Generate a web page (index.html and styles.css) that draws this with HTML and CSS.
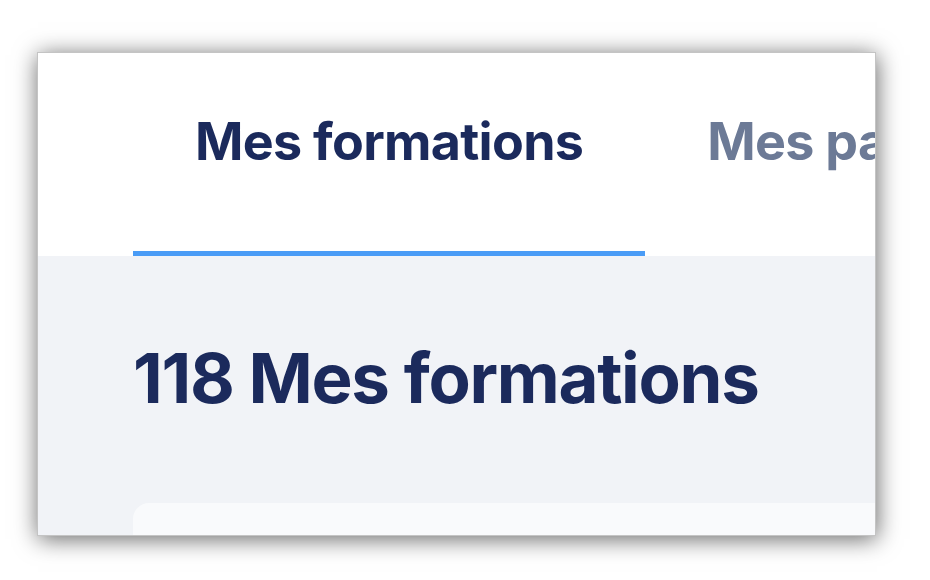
FILE: index.html
```html
<!DOCTYPE html>
<html lang="fr">
<head>
<meta charset="utf-8">
<title>Mes formations</title>
<link rel="stylesheet" href="styles.css">
</head>
<body>
<div class="window">
  <nav class="tabs">
    <div class="tab tab-active">Mes formations</div>
    <div class="tab">Mes parcours</div>
  </nav>
  <main class="content">
    <h1 class="title">118 Mes formations</h1>
    <div class="card"></div>
  </main>
</div>
</body>
</html>
```
FILE: styles.css
```css
html, body {
  margin: 0;
  padding: 0;
  background: #ffffff;
  height: 580px;
  overflow: hidden;
}
body {
  font-family: "Inter", "Liberation Sans", sans-serif;
  padding-top: 52px;
  padding-left: 37px;
  box-sizing: border-box;
}
.window {
  width: 839px;
  height: 484px;
  box-sizing: border-box;
  border: 1px solid #c4c4c4;
  background: #ffffff;
  overflow: hidden;
  box-shadow: 1px 3px 22px rgba(0, 0, 0, 0.6);
  display: flex;
  flex-direction: column;
}
.tabs {
  height: 203px;
  display: flex;
  padding-left: 95px;
  background: #ffffff;
  flex-shrink: 0;
}
.tab {
  padding: 0 62px;
  font-size: 52px;
  font-weight: 700;
  letter-spacing: -0.7px;
  color: #6c7a96;
  white-space: nowrap;
  padding-top: 57px;
  box-sizing: border-box;
  flex-shrink: 0;
}
.tab-active {
  color: #1b2a5c;
  border-bottom: 5px solid #4a9cf6;
}
.content {
  flex: 1;
  background: #f1f3f7;
  padding-left: 95px;
  padding-top: 81px;
  display: flex;
  flex-direction: column;
}
.title {
  margin: 0;
  font-size: 69px;
  font-weight: 700;
  letter-spacing: -1.3px;
  color: #1b2a5c;
  line-height: 1.2;
}
.card {
  margin-top: 83px;
  height: 60px;
  background: #f9fafc;
  border-radius: 16px 0 0 0;
}
```
